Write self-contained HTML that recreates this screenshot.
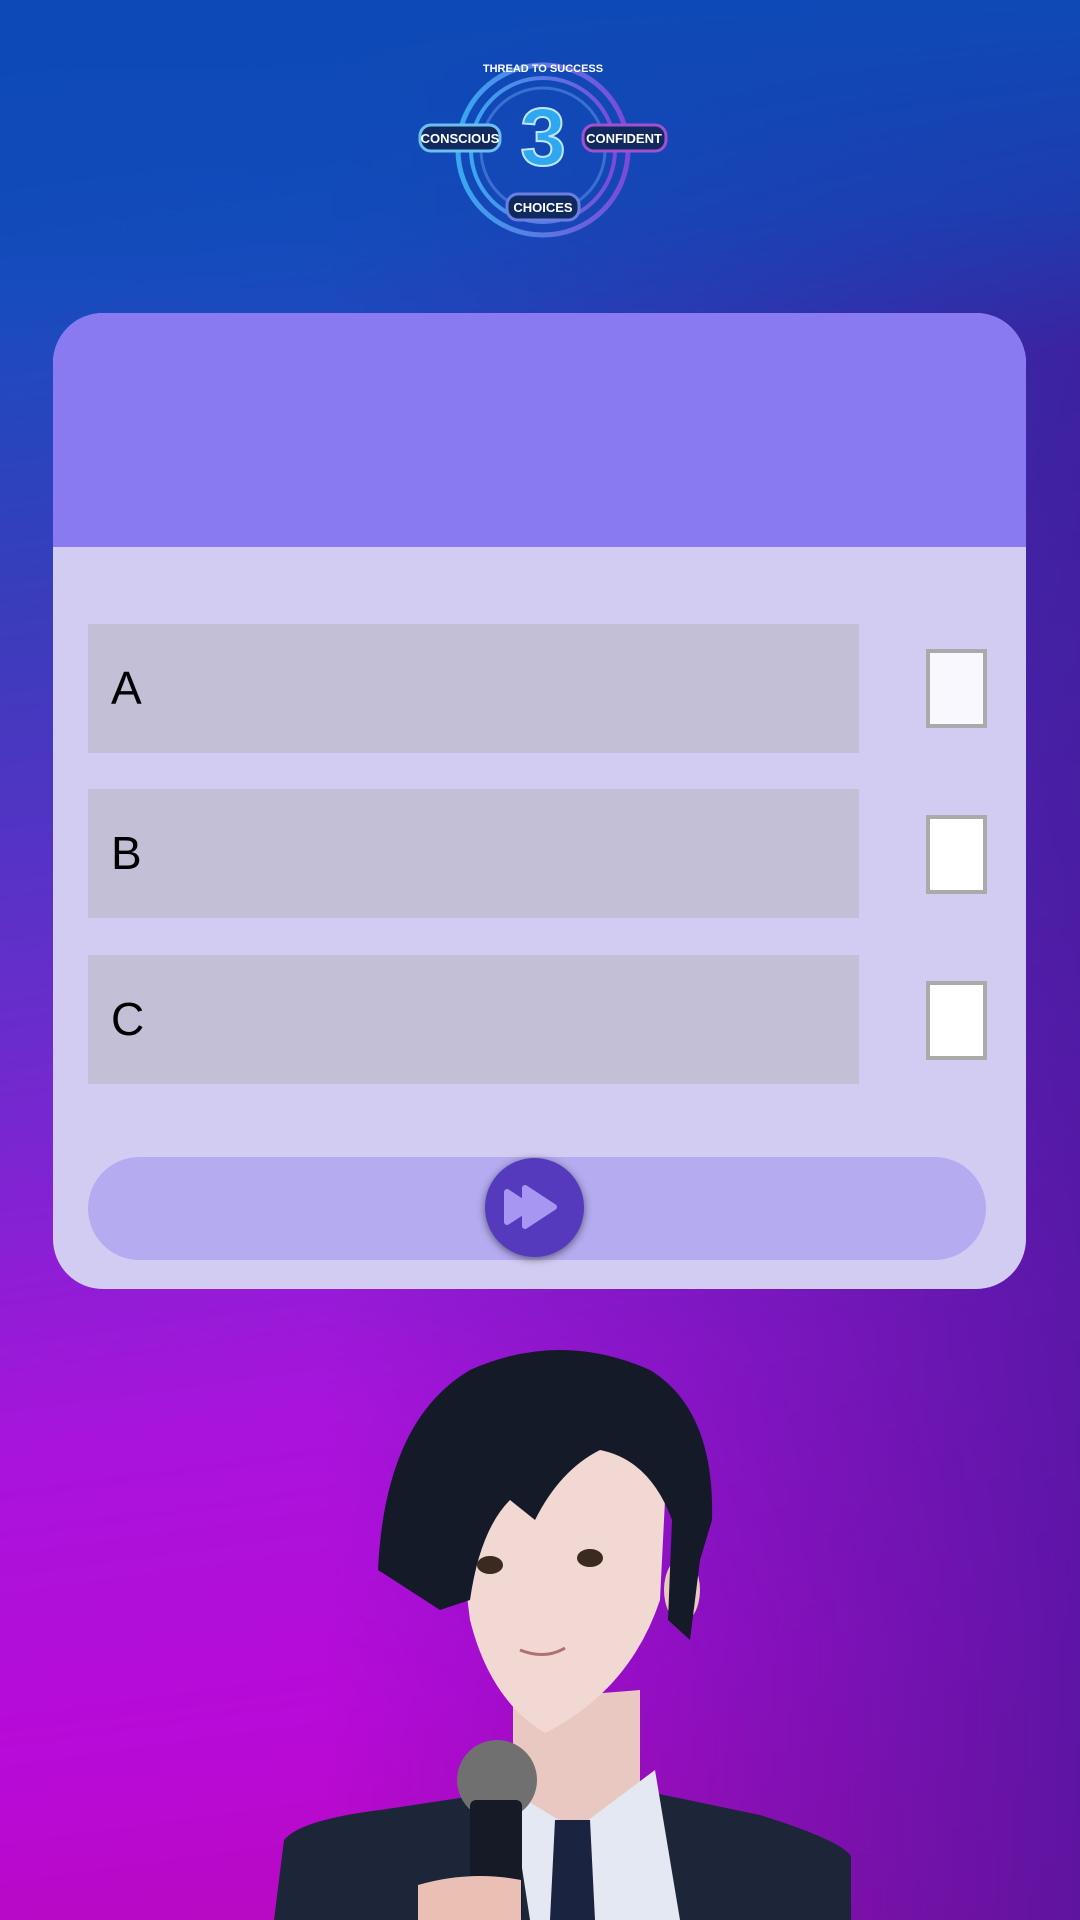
<!DOCTYPE html>
<html><head><meta charset="utf-8"><style>
*{margin:0;padding:0;box-sizing:border-box}
body{width:1080px;height:1920px;overflow:hidden;position:relative;font-family:"Liberation Sans",sans-serif;
background:linear-gradient(172deg,#0d4ab7 0%,#1a4cc0 14%,#3b3cbc 30%,#6a2ccc 50%,#a814dc 70%,#b80ad8 85%,#b808b8 100%);}
.ov{position:absolute;inset:0;background:linear-gradient(to left,rgba(64,24,150,0.75) 0%,rgba(64,24,150,0.35) 35%,rgba(64,24,150,0) 70%)}
.ov2{position:absolute;left:0;top:0;width:100%;height:350px;background:linear-gradient(to bottom,rgba(14,74,183,1) 0%,rgba(14,74,183,0.6) 60%,rgba(14,74,183,0) 100%)}
.card{position:absolute;left:53px;top:313px;width:973px;height:976px;border-radius:50px;background:#d3ccf2;overflow:hidden}
.hd{position:absolute;left:0;top:0;width:100%;height:234px;background:#8a7af1}
.opt{position:absolute;left:35px;width:771px;height:129px;background:#c3bfd6;font-size:46px;color:#000;padding-left:23px;line-height:129px}
.cb{position:absolute;left:873px;width:61px;height:79px;background:#fff;border:4px solid #aaa}
.bar{position:absolute;left:35px;top:844px;width:898px;height:103px;border-radius:52px;background:#b4abf0}
.btn{position:absolute;left:432px;top:845px;width:99px;height:99px;border-radius:50%;background:#553abd;box-shadow:0 2px 8px rgba(0,0,0,.5)}
</style></head><body>
<div class="ov"></div>
<div class="ov2"></div>
<svg style="position:absolute;left:415px;top:50px" width="260" height="200" viewBox="0 0 260 200">
<defs><linearGradient id="lg" x1="0" x2="1"><stop offset="0" stop-color="#3aa8f0"/><stop offset="1" stop-color="#7a4ad8"/></linearGradient></defs>
<circle cx="128" cy="100" r="85" fill="none" stroke="url(#lg)" stroke-width="5"/>
<circle cx="128" cy="100" r="72" fill="none" stroke="url(#lg)" stroke-width="4"/>
<circle cx="128" cy="100" r="62" fill="none" stroke="#3a70d0" stroke-width="3"/>
<text x="128" y="22" font-size="11" fill="#fff" text-anchor="middle" font-weight="bold">THREAD TO SUCCESS</text>
<text x="128" y="115" font-size="82" fill="#2ea8f0" stroke="#bfe6ff" stroke-width="2" text-anchor="middle" font-weight="bold">3</text>
<rect x="5" y="75" width="80" height="26" rx="11" fill="#102a60" stroke="#6cc0f0" stroke-width="3"/>
<text x="45" y="93" font-size="13" fill="#fff" text-anchor="middle" font-weight="bold">CONSCIOUS</text>
<rect x="168" y="75" width="83" height="26" rx="11" fill="#102a60" stroke="#a050d0" stroke-width="3"/>
<text x="209" y="93" font-size="13" fill="#fff" text-anchor="middle" font-weight="bold">CONFIDENT</text>
<rect x="92" y="144" width="72" height="26" rx="11" fill="#102a60" stroke="#6a80e0" stroke-width="3"/>
<text x="128" y="162" font-size="13" fill="#fff" text-anchor="middle" font-weight="bold">CHOICES</text>
</svg>
<div class="card">
<div class="hd"></div>
<div class="opt" style="top:311px">A</div>
<div class="opt" style="top:476px">B</div>
<div class="opt" style="top:642px">C</div>
<div class="cb" style="top:336px;background:#f8f8fe"></div>
<div class="cb" style="top:502px"></div>
<div class="cb" style="top:668px"></div>
<div class="bar"></div>
<div class="btn"><svg width="99" height="99" viewBox="0 0 99 99"><path d="M22 34 L22 64 L45 49 Z" fill="#a796f2" stroke="#a796f2" stroke-width="6" stroke-linejoin="round"/><path d="M40 30 L40 68 L69 49 Z" fill="#a796f2" stroke="#a796f2" stroke-width="6" stroke-linejoin="round"/></svg></div>
</div>
<svg style="position:absolute;left:0;top:1330px" width="1080" height="590" viewBox="0 1330 1080 590">
<path d="M284 1840 Q300 1820 380 1810 L513 1790 L640 1790 L760 1815 Q840 1840 851 1856 L851 1920 L274 1920 Z" fill="#1c2638"/>
<path d="M513 1700 L640 1690 L640 1800 L575 1830 L513 1800 Z" fill="#e8c8c0"/>
<path d="M510 1790 L575 1830 L655 1770 L680 1920 L530 1920 Z" fill="#e4e8f2"/>
<path d="M555 1820 L590 1820 L595 1920 L550 1920 Z" fill="#1a2440"/>
<path d="M455 1500 Q470 1420 560 1410 Q660 1420 665 1500 L660 1600 Q630 1690 545 1733 Q490 1700 470 1620 Z" fill="#f2d8d2"/>
<ellipse cx="682" cy="1590" rx="18" ry="32" fill="#eac8c0"/>
<path d="M378 1570 Q385 1420 470 1370 Q560 1330 650 1370 Q715 1410 712 1520 L700 1560 L690 1640 L668 1620 L672 1520 Q650 1460 600 1450 Q560 1470 535 1520 L510 1500 Q480 1530 470 1600 L440 1610 Z" fill="#141a28"/>
<ellipse cx="490" cy="1565" rx="13" ry="9" fill="#3a2a20"/>
<ellipse cx="590" cy="1558" rx="13" ry="9" fill="#3a2a20"/>
<path d="M520 1650 Q545 1660 565 1648" stroke="#b07070" stroke-width="3" fill="none"/>
<circle cx="497" cy="1780" r="40" fill="#707070"/>
<rect x="470" y="1800" width="52" height="120" rx="6" fill="#151a26"/>
<path d="M418 1885 Q470 1870 521 1880 L521 1920 L418 1920 Z" fill="#eac0b4"/>
</svg>
</body></html>
